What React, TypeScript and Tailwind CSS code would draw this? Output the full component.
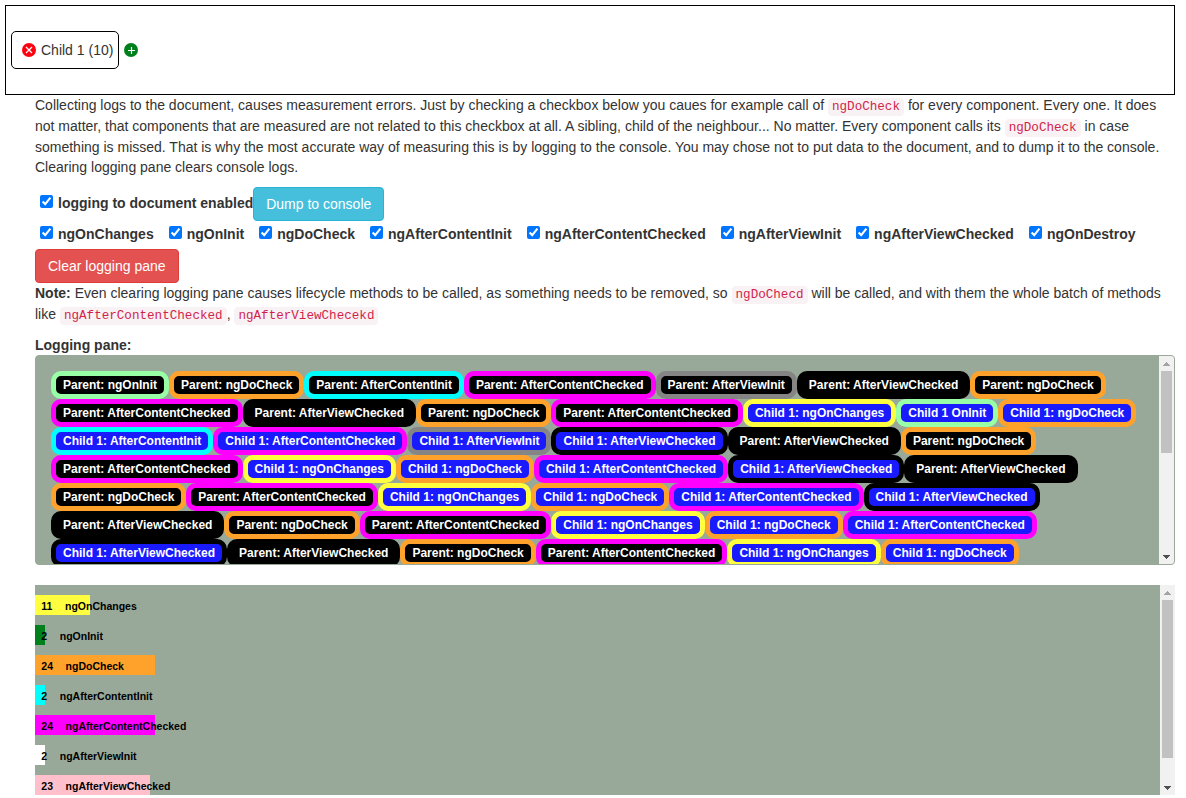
import React from "react";

const tags: Record<string, [string, string]> = {
  i: ["ngOnInit", "border-[#98ffa6]"],
  o: ["OnInit", "border-[#98ffa6]"],
  d: ["ngDoCheck", "border-[#ffa22b]"],
  c: ["AfterContentInit", "border-[#00ffff]"],
  k: ["AfterContentChecked", "border-[#ff00ff]"],
  v: ["AfterViewInit", "border-[#858585]"],
  w: ["AfterViewChecked", "border-black"],
  g: ["ngOnChanges", "border-[#ffff40]"],
};

// P = parent event, C = child event; the second letter is the hook.
const log =
  "Pi Pd Pc Pk Pv Pw Pd Pk Pw Pd Pk Cg Co Cd Cc Ck Cv Cw Pw Pd Pk Cg Cd Ck Cw Pw Pd Pk Cg Cd Ck Cw Pw Pd Pk Cg Cd Ck Cw Pw Pd Pk Cg Cd".split(" ");

const hooks = [
  "ngOnChanges",
  "ngOnInit",
  "ngDoCheck",
  "ngAfterContentInit",
  "ngAfterContentChecked",
  "ngAfterViewInit",
  "ngAfterViewChecked",
  "ngOnDestroy",
];

const stats: [number, string, string][] = [
  [11, "ngOnChanges", "bg-[#ffff40]"],
  [2, "ngOnInit", "bg-[#00801c]"],
  [24, "ngDoCheck", "bg-[#ffa22b]"],
  [2, "ngAfterContentInit", "bg-[#00ffff]"],
  [24, "ngAfterContentChecked", "bg-[#ff00ff]"],
  [2, "ngAfterViewInit", "bg-white"],
  [23, "ngAfterViewChecked", "bg-[#ffc0cb]"],
];

function Code({ children }: { children: string }) {
  return (
    <code className="rounded-[4px] bg-[#f9f2f4] px-[4px] py-[2px] font-['Liberation_Mono',monospace] text-[12.6px] leading-[18px] text-[#d11f4c]">
      {children}
    </code>
  );
}

function Check({ label }: { label: string }) {
  return (
    <label className="flex h-5 items-start whitespace-nowrap font-bold">
      <input type="checkbox" defaultChecked className="mt-[2px] mr-[5px] h-[13px] w-[13px]" />
      {label}
    </label>
  );
}

function Scrollbar({ thumb }: { thumb: string }) {
  return (
    <div className="flex w-[15px] shrink-0 flex-col items-center bg-[#f1f1f1]">
      <svg width="15" height="15" shapeRendering="crispEdges" className="shrink-0">
        <path d="M7 6h1v1h1v1h1v1h1v1H4V9h1V8h1V7h1z" fill="#a3a3a3" />
      </svg>
      <div className={"w-[11px] bg-[#c1c1c1] " + thumb} />
      <svg width="15" height="15" shapeRendering="crispEdges" className="mt-auto shrink-0">
        <path d="M4 6h7v1h-1v1H9v1H8v1H7V9H6V8H5V7H4z" fill="#505050" />
      </svg>
    </div>
  );
}

export default function App() {
  return (
    <div className="h-[798px] overflow-hidden bg-white px-[5px] pt-[5px] font-['Liberation_Sans',Arial,sans-serif] text-[14px] leading-[20px] text-[#333333]">
      <div className="flex h-[90px] w-[1170px] items-center border border-black pl-[5px]">
        <div className="flex h-[38px] w-[108px] items-center whitespace-nowrap rounded-[5px] border border-black pl-[10px]">
          <svg width="14" height="14" viewBox="0 0 14 14" className="mr-[5px] shrink-0">
            <circle cx="7" cy="7" r="7" fill="#ff0010" />
            <path d="M4 4l6 6M10 4l-6 6" stroke="#fff" strokeWidth="1.3" />
          </svg>
          Child 1 (10)
        </div>
        <svg width="14" height="14" viewBox="0 0 14 14" className="ml-[5px]">
          <circle cx="7" cy="7" r="7" fill="#00801c" />
          <path d="M7.5 4v7M4 7.5h7" stroke="#fff" strokeWidth="1.2" />
        </svg>
      </div>

      <div className="ml-[30px] w-[1140px]">
        <p className="mb-[10px]">
          Collecting logs to the document, causes measurement errors. Just by checking a checkbox below you caues for
          example call of <Code>ngDoCheck</Code> for every component. Every one. It does not matter, that components
          that are measured are not related to this checkbox at all. A sibling, child of the neighbour... No matter.
          Every component calls its <Code>ngDoCheck</Code> in case something is missed. That is why the most accurate
          way of measuring this is by logging to the console. You may chose not to put data to the document, and to
          dump it to the console. Clearing logging pane clears console logs.
        </p>

        <div className="flex h-[34px] pl-[5px]">
          <div className="pt-[6px]">
            <Check label="logging to document enabled" />
          </div>
          <button className="h-[34px] rounded-[4px] border border-[#28b4d4] bg-[#46bfdc] px-[12px] text-white">
            Dump to console
          </button>
        </div>
        <div className="flex h-[28px] gap-[15px] pt-[3px] pl-[5px]">
          {hooks.map((h) => (
            <Check key={h} label={h} />
          ))}
        </div>
        <button className="block h-[34px] rounded-[4px] border border-[#df3b3b] bg-[#e35151] px-[12px] text-white">
          Clear logging pane
        </button>
        <p className="mb-[10px]">
          <b>Note:</b> Even clearing logging pane causes lifecycle methods to be called, as something needs to be
          removed, so <Code>ngDoChecd</Code> will be called, and with them the whole batch of methods like{" "}
          <Code>ngAfterContentChecked</Code>, <Code>ngAfterViewChecekd</Code>
        </p>
        <div className="font-bold">Logging pane:</div>

        <div className="flex h-[210px] overflow-hidden rounded-[4px] border border-[#98a99a] bg-[#98a99a]">
          <div className="flex flex-1 flex-wrap content-start p-[15px]">
            {log.map((e, i) => {
              const child = e[0] === "C";
              return (
                <span
                  key={i}
                  className={
                    "h-[28px] whitespace-nowrap rounded-[10px] border-[5px] px-[7px] py-[3px] text-[12px] leading-[12px] font-bold text-white " +
                    (child ? "bg-[#1a1aff] " : "bg-black ") +
                    tags[e[1]][1]
                  }
                >
                  {(child ? (e[1] === "o" ? "Child 1 " : "Child 1: ") : "Parent: ") + tags[e[1]][0]}
                </span>
              );
            })}
          </div>
          <Scrollbar thumb="h-[82px]" />
        </div>

        <div className="mt-[20px] flex h-[210px] overflow-hidden bg-[#98a99a]">
          <div className="flex-1 pt-[10px]">
            {stats.map(([n, name, color]) => (
              <div
                key={name}
                className={"mb-[10px] flex h-[20px] whitespace-nowrap pt-[6px] text-[10.5px] leading-[10.5px] font-bold text-black " + color}
                style={{ width: n * 5 }}
              >
                <span className="px-[6.3px]">{n}</span>
                <span className="px-[6.3px]">{name}</span>
              </div>
            ))}
          </div>
          <Scrollbar thumb="h-[158px]" />
        </div>
      </div>
    </div>
  );
}
